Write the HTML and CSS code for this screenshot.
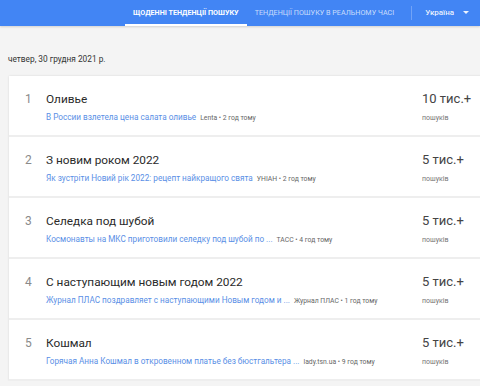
FILE: index.html
```html
<!DOCTYPE html>
<html lang="uk">
<head>
    <meta charset="UTF-8">
    <title>Тенденції пошуку</title>
    <link rel="stylesheet" href="styles.css">
</head>
<body>
    <!-- Top bar -->
    <div class="topbar">
        <div class="tab active">Щоденні тенденції пошуку</div>
        <div class="tab">Тенденції пошуку в реальному часі</div>
        <div class="divider"></div>
        <div class="country">Україна <span class="caret"></span></div>
    </div>

    <div class="date">четвер, 30 грудня 2021 р.</div>

    <div class="list">
        <div class="row">
            <div class="num">1</div>
            <div class="info">
                <div class="title">Оливье</div>
                <div class="sub"><span class="link">В России взлетела цена салата оливье</span><span class="source">Lenta • 2 год тому</span></div>
            </div>
            <div class="count">
                <div class="value">10 тис.+</div>
                <div class="label">пошуків</div>
            </div>
        </div>
        <div class="row">
            <div class="num">2</div>
            <div class="info">
                <div class="title">З новим роком 2022</div>
                <div class="sub"><span class="link">Як зустріти Новий рік 2022: рецепт найкращого свята</span><span class="source">УНІАН • 2 год тому</span></div>
            </div>
            <div class="count">
                <div class="value">5 тис.+</div>
                <div class="label">пошуків</div>
            </div>
        </div>
        <div class="row">
            <div class="num">3</div>
            <div class="info">
                <div class="title">Селедка под шубой</div>
                <div class="sub"><span class="link">Космонавты на МКС приготовили селедку под шубой по ...</span><span class="source">ТАСС • 4 год тому</span></div>
            </div>
            <div class="count">
                <div class="value">5 тис.+</div>
                <div class="label">пошуків</div>
            </div>
        </div>
        <div class="row">
            <div class="num">4</div>
            <div class="info">
                <div class="title">С наступающим новым годом 2022</div>
                <div class="sub"><span class="link">Журнал ПЛАС поздравляет с наступающими Новым годом и ...</span><span class="source">Журнал ПЛАС • 1 год тому</span></div>
            </div>
            <div class="count">
                <div class="value">5 тис.+</div>
                <div class="label">пошуків</div>
            </div>
        </div>
        <div class="row">
            <div class="num">5</div>
            <div class="info">
                <div class="title">Кошмал</div>
                <div class="sub"><span class="link">Горячая Анна Кошмал в откровенном платье без бюстгальтера ...</span><span class="source">lady.tsn.ua • 9 год тому</span></div>
            </div>
            <div class="count">
                <div class="value">5 тис.+</div>
                <div class="label">пошуків</div>
            </div>
        </div>
    </div>
</body>
</html>
```

FILE: styles.css
```css
body {
    margin: 0;
    font-family: Roboto, "Noto Sans", Arial, sans-serif;
    background-color: #f4f4f4;
    color: #212121;
    overflow: hidden;
}
.topbar {
    display: flex;
    align-items: stretch;
    height: 26px;
    padding-left: 125px;
    background-color: #4285f4;
    box-shadow: 0 1px 2px rgba(0, 0, 0, 0.15);
}
.tab {
    display: flex;
    align-items: center;
    padding: 0 8px;
    font-size: 7.2px;
    text-transform: uppercase;
    color: rgba(255, 255, 255, 0.72);
    border-bottom: 2px solid transparent;
    box-sizing: border-box;
    white-space: nowrap;
}
.tab.active {
    color: #ffffff;
    font-weight: 700;
    border-bottom-color: #ffffff;
}
.divider {
    width: 1px;
    height: 14px;
    margin: 6px 13px 0 9px;
    background-color: rgba(255, 255, 255, 0.25);
}
.country {
    display: flex;
    align-items: center;
    padding-bottom: 2px;
    font-size: 8px;
    font-weight: 500;
    color: rgba(255, 255, 255, 0.9);
}
.caret {
    width: 0;
    height: 0;
    margin-left: 9px;
    border-left: 3px solid transparent;
    border-right: 3px solid transparent;
    border-top: 3px solid rgba(255, 255, 255, 0.9);
}
.date {
    padding: 28px 0 0 8px;
    height: 22px;
    font-size: 8.3px;
    color: #333333;
}
.list {
    margin-left: 9px;
    margin-right: -20px;
    background-color: #ffffff;
    box-shadow: 0 0 2px rgba(0, 0, 0, 0.12);
}
.row {
    display: flex;
    height: 61px;
    box-sizing: border-box;
    padding-top: 16px;
    border-bottom: 2px solid #eeeeee;
}
.num {
    width: 37px;
    padding-left: 16px;
    box-sizing: border-box;
    font-size: 12px;
    line-height: 14px;
    color: #8a8a8a;
}
.info {
    flex: 1;
}
.title {
    font-size: 11.8px;
    line-height: 14px;
    color: #2a2a2a;
}
.sub {
    margin-top: 6px;
    font-size: 8.2px;
    line-height: 10px;
    white-space: nowrap;
}
.link {
    color: #5a8fe6;
    margin-right: 4px;
}
.source {
    font-size: 6.8px;
    color: #666666;
}
.count {
    width: 78px;
}
.value {
    font-size: 13px;
    line-height: 14px;
    color: #444444;
}
.label {
    margin-top: 7px;
    font-size: 7px;
    line-height: 10px;
    color: #757575;
}
```
